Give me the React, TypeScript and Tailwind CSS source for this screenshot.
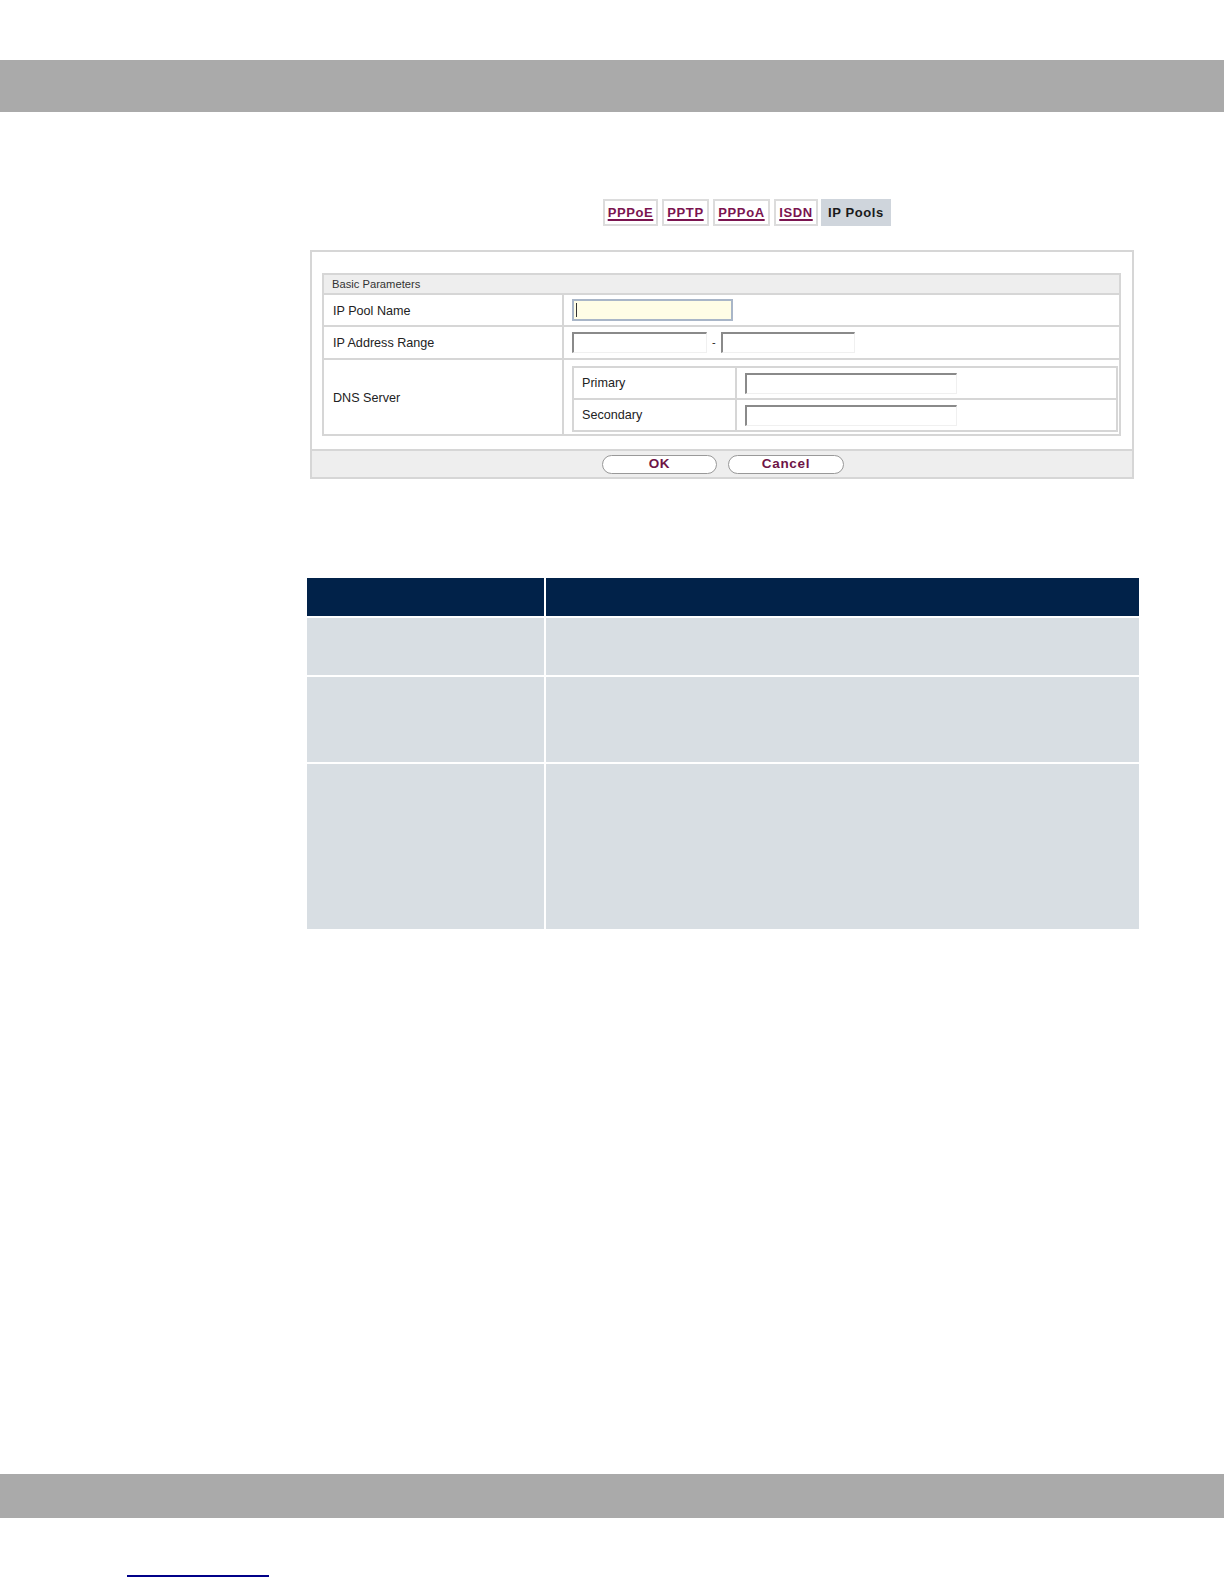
import React from 'react';

const tabs = [
  { label: 'PPPoE', w: 'w-[55px]' },
  { label: 'PPTP', w: 'w-[47px]' },
  { label: 'PPPoA', w: 'w-[57px]' },
  { label: 'ISDN', w: 'w-[44px]' },
];

const TextBox = ({ className = '' }: { className?: string }) => (
  <div className={`h-[21px] border-t-2 border-l-2 border-t-[#8a8a8a] border-l-[#8a8a8a] border-r border-b border-r-[#f0f0f0] border-b-[#f0f0f0] bg-white ${className}`} />
);

export default function App() {
  return (
    <div className="w-[1224px] h-[1584px] bg-white font-['Liberation_Sans',Arial,sans-serif] text-[12.6px] text-[#222]">
      <div className="h-[60px]" />
      {/* Top bar */}
      <div className="h-[52px] bg-[#aaaaaa]" />

      {/* Tabs */}
      <div className="mt-[87px] ml-[603px] flex gap-[4px] h-[27px]">
        {tabs.map((t) => (
          <div
            key={t.label}
            className={`${t.w} h-full border-2 border-[#dcdcdc] bg-white flex items-center justify-center`}
          >
            <span className="font-bold text-[13px] tracking-[0.6px] text-[#7a1450] underline decoration-[1.5px] underline-offset-2">{t.label}</span>
          </div>
        ))}
        <div className="w-[70px] h-full bg-[#cfd5dc] flex items-center justify-center -ml-[1px]">
          <span className="font-bold text-[13px] tracking-[0.6px] text-[#1a1a1a]">IP Pools</span>
        </div>
      </div>

      {/* Form panel */}
      <div className="mt-[24px] ml-[310px] w-[824px] h-[229px] border-2 border-[#d6d6d6] flex flex-col">
        <div className="pt-[21px] pl-[10px]">
          <div className="w-[799px] border-2 border-[#d6d6d6]">
            <div className="h-[20px] bg-[#eeeeee] border-b-2 border-[#d6d6d6] flex items-center pl-[8px] text-[11.2px] text-[#333]">
              Basic Parameters
            </div>
            <div className="flex h-[32px] border-b-2 border-[#d6d6d6]">
              <div className="w-[240px] border-r-2 border-[#d6d6d6] flex items-center pl-[9px] pt-[2px]">IP Pool Name</div>
              <div className="flex-1 flex items-center pl-[8px]">
                <div className="w-[161px] h-[22px] border-2 border-[#a9b6c8] bg-[#fffde6] flex items-center pl-[2px]">
                  <div className="w-[1px] h-[14px] bg-[#333]" />
                </div>
              </div>
            </div>
            <div className="flex h-[33px] border-b-2 border-[#d6d6d6]">
              <div className="w-[240px] border-r-2 border-[#d6d6d6] flex items-center pl-[9px] pt-[1px]">IP Address Range</div>
              <div className="flex-1 flex items-center pl-[8px]">
                <TextBox className="w-[135px]" />
                <span className="mx-[5px] text-[11px]">-</span>
                <TextBox className="w-[134px]" />
              </div>
            </div>
            <div className="flex h-[74px]">
              <div className="w-[240px] border-r-2 border-[#d6d6d6] flex items-center pl-[9px] pt-[3px]">DNS Server</div>
              <div className="flex-1 pt-[6px] pl-[8px] pr-[1px]">
                <div className="border-2 border-[#d6d6d6]">
                  <div className="flex h-[32px] border-b-2 border-[#d6d6d6]">
                    <div className="w-[163px] border-r-2 border-[#d6d6d6] flex items-center pl-[8px]">Primary</div>
                    <div className="flex-1 flex items-center pl-[8px]">
                      <TextBox className="w-[212px]" />
                    </div>
                  </div>
                  <div className="flex h-[30px]">
                    <div className="w-[163px] border-r-2 border-[#d6d6d6] flex items-center pl-[8px]">Secondary</div>
                    <div className="flex-1 flex items-center pl-[8px]">
                      <TextBox className="w-[212px]" />
                    </div>
                  </div>
                </div>
              </div>
            </div>
          </div>
        </div>
        <div className="mt-auto h-[28px] bg-[#eeeeee] border-t-2 border-[#d6d6d6] flex items-center pl-[290px] gap-[11px]">
          <button className="w-[115px] h-[19px] rounded-full border border-[#999] bg-white flex items-center justify-center font-bold text-[13.5px] tracking-[0.7px] text-[#6e1446]">
            OK
          </button>
          <button className="w-[116px] h-[19px] rounded-full border border-[#999] bg-white flex items-center justify-center font-bold text-[13.5px] tracking-[0.7px] text-[#6e1446]">
            Cancel
          </button>
        </div>
      </div>

      {/* Description table */}
      <div className="mt-[99px] ml-[307px] w-[832px] flex flex-col gap-[2px]">
        <div className="flex h-[38px] gap-[2px]">
          <div className="w-[237px] bg-[#012249]" />
          <div className="flex-1 bg-[#012249]" />
        </div>
        <div className="flex h-[57px] gap-[2px]">
          <div className="w-[237px] bg-[#d8dee3]" />
          <div className="flex-1 bg-[#d8dee3]" />
        </div>
        <div className="flex h-[85px] gap-[2px]">
          <div className="w-[237px] bg-[#d8dee3]" />
          <div className="flex-1 bg-[#d8dee3]" />
        </div>
        <div className="flex h-[165px] gap-[2px]">
          <div className="w-[237px] bg-[#d8dee3]" />
          <div className="flex-1 bg-[#d8dee3]" />
        </div>
      </div>

      {/* Bottom bar */}
      <div className="mt-[545px] h-[44px] bg-[#aaaaaa]" />
      <div className="mt-[57px] ml-[127px] w-[142px] h-[2px] bg-[#000088]" />
    </div>
  );
}
